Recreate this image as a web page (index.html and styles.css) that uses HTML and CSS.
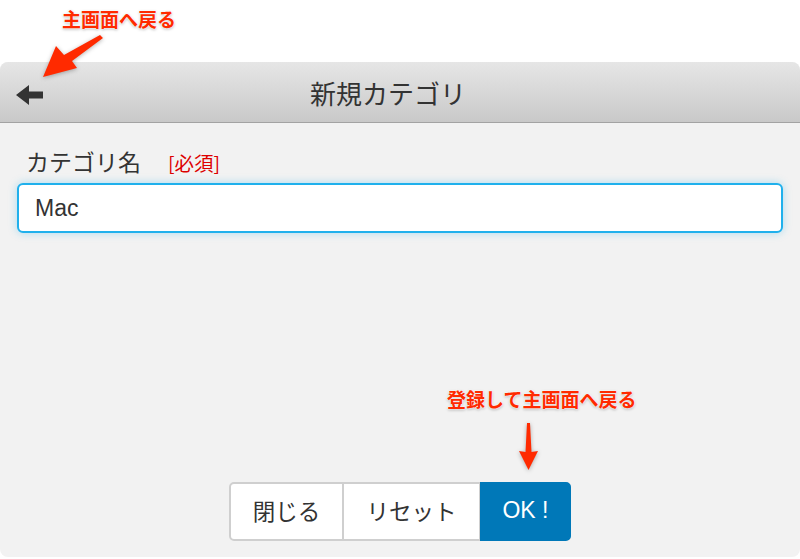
FILE: index.html
```html
<!DOCTYPE html>
<html lang="ja">
<head>
    <meta charset="UTF-8">
    <title>新規カテゴリ</title>
    <link rel="stylesheet" href="styles.css">
</head>
<body>
<div class="page">
    <div class="dialog">
        <div class="header">
            <a class="back" href="#">
                <svg width="27" height="20" viewBox="0 0 27 20">
                    <path d="M0 10 L13 0 L13 6.5 L27 6.5 L27 13.5 L13 13.5 L13 20 Z" fill="#333"/>
                </svg>
            </a>
            <h1>新規カテゴリ</h1>
        </div>
        <div class="content">
            <label class="field-label" for="name">カテゴリ名<span class="required">[必須]</span></label>
            <input class="field" id="name" type="text" value="Mac">
            <div class="buttons">
                <button class="btn">閉じる</button>
                <button class="btn">リセット</button>
                <button class="btn primary">OK !</button>
            </div>
        </div>
    </div>

    <!-- annotations -->
    <div class="note note-back">主画面へ戻る</div>
    <svg class="arrow arrow-back" width="66" height="44" viewBox="0 0 66 44">
        <path d="M60 0 L63 3 L32 26 L37 33 L3 42 L16 11 L24 20 Z" fill="#ff2a00"/>
    </svg>
    <div class="note note-ok">登録して主画面へ戻る</div>
    <svg class="arrow arrow-ok" width="22" height="50" viewBox="0 0 22 50">
        <path d="M9 2 L12 2 L13.5 31 L20 30 L10.5 49 L1 30 L7.5 31 Z" fill="#ff2a00"/>
    </svg>
</div>
</body>
</html>
```

FILE: styles.css
```css
html, body {
    margin: 0;
    padding: 0;
    background: #fff;
}

body {
    font-family: "Noto Sans CJK JP", "Liberation Sans", sans-serif;
    color: #333;
}

.page {
    position: relative;
    height: 559px;
    padding-top: 62px;
    box-sizing: border-box;
}

.dialog {
    height: 495px;
    display: flex;
    flex-direction: column;
    background: #f2f2f2;
    border-radius: 8px;
}

.header {
    position: relative;
    height: 60px;
    display: flex;
    align-items: center;
    justify-content: center;
    background: linear-gradient(#e6e6e6, #c9c9c9);
    border-bottom: 1px solid #a3a3a3;
    border-radius: 8px 8px 0 0;
}

.header h1 {
    margin: 0 24px 0 0;
    font-size: 26px;
    font-weight: normal;
    color: #333;
}

.back {
    position: absolute;
    left: 16px;
    top: 23px;
    line-height: 0;
}

.content {
    flex: 1;
    display: flex;
    flex-direction: column;
    padding: 22px 17px 16px 17px;
}

.field-label {
    font-size: 23px;
    line-height: 32px;
    padding-left: 9px;
    color: #333;
}

.required {
    margin-left: 27px;
    font-size: 19.5px;
    color: #dd0000;
}

.field {
    margin-top: 4px;
    height: 50px;
    box-sizing: border-box;
    border: 2px solid #1fb0ec;
    border-radius: 6px;
    padding: 0 16px;
    font-family: "Liberation Sans", sans-serif;
    font-size: 23px;
    color: #333;
    background: #fff;
    box-shadow: 0 0 8px rgba(31, 176, 236, 0.35);
    outline: none;
}

.buttons {
    margin-top: auto;
    display: flex;
    justify-content: center;
}

.btn {
    height: 59px;
    padding: 0 0 3px 0;
    border: 2px solid #cfcfcf;
    border-left-width: 1px;
    border-right-width: 1px;
    background: #fff;
    font-family: "Noto Sans CJK JP", "Liberation Sans", sans-serif;
    font-size: 22.5px;
    color: #333;
}

.btn:first-child {
    border-left-width: 2px;
    border-radius: 5px 0 0 5px;
    width: 114px;
}

.btn:nth-child(2) {
    width: 137px;
}

.btn.primary {
    width: 91px;
    background: #0078b8;
    border-color: #0078b8;
    color: #fff;
    font-family: "Liberation Sans", sans-serif;
    font-size: 23px;
    border-radius: 0 5px 5px 0;
}

.note {
    position: absolute;
    font-size: 19px;
    font-weight: bold;
    color: #ff2a00;
    text-shadow: 0 0 2px #fff, 0 0 2px #fff, 0 1px 3px rgba(0, 0, 0, 0.35);
}

.note-back {
    left: 62px;
    top: 5px;
}

.note-ok {
    left: 447px;
    top: 385px;
}

.arrow {
    position: absolute;
    filter: drop-shadow(0 1px 2px rgba(0, 0, 0, 0.3));
}

.arrow-back {
    left: 40px;
    top: 35px;
}

.arrow-ok {
    left: 518px;
    top: 421px;
}
```
